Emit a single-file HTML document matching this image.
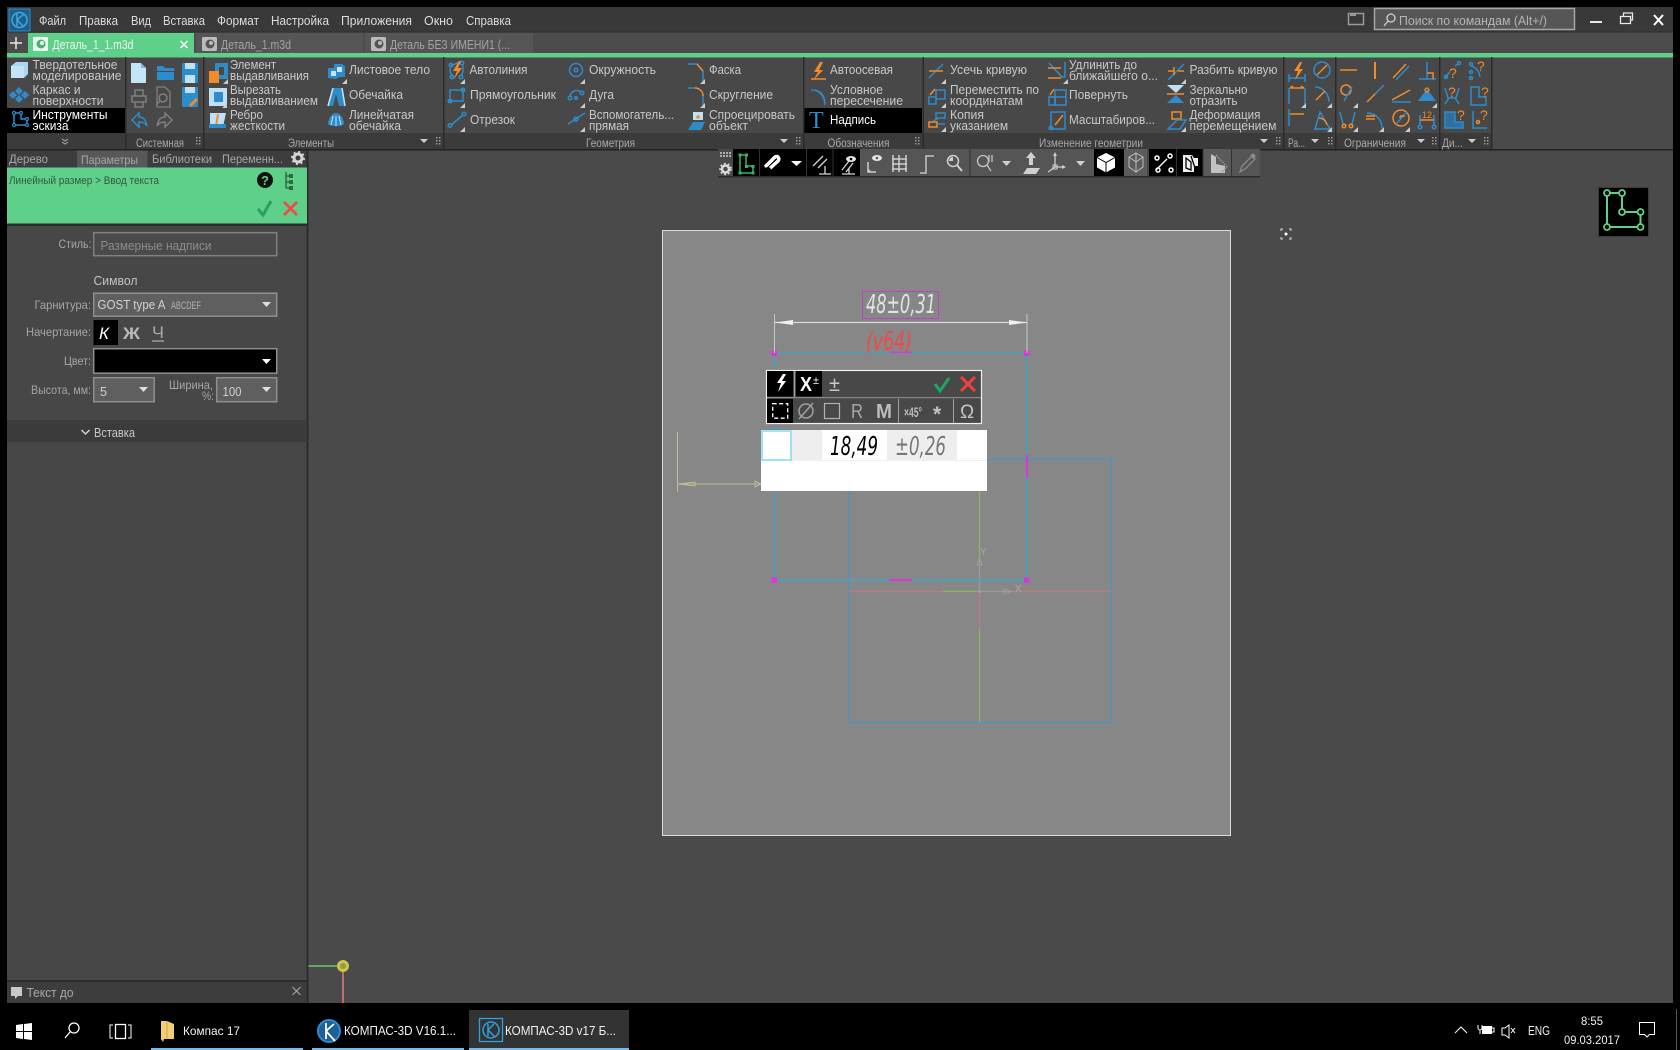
<!DOCTYPE html>
<html lang="ru"><head><meta charset="utf-8"><title>КОМПАС-3D</title>
<style>
html,body{margin:0;padding:0;background:#000;width:1680px;height:1050px;overflow:hidden}
svg{display:block;position:absolute;left:0;top:0}
text{font-family:"Liberation Sans","Noto Sans CJK SC",sans-serif;font-size:12.5px;fill:#c8c8c8}
.m{font-size:13px;fill:#dcdcdc}
.l{font-size:11.5px;fill:#a8a8a8}
.p{font-size:12px;fill:#a6a6a6}
.w{fill:#fff}
.k{font-size:12.5px;fill:#f2f2f2}
.g{font-family:"DejaVu Sans","Liberation Sans",sans-serif;font-weight:200;font-style:italic;font-size:26px}
.b{fill:none;stroke:#2f8ccb;stroke-width:1.5}
.o{fill:none;stroke:#f28c28;stroke-width:1.5}
.y{fill:none;stroke:#bdbdbd;stroke-width:1.5}
.wh{fill:none;stroke:#fff;stroke-width:1.5}
.t{fill:#d0d0d0}
.d{fill:#2f8ccb}
</style></head><body>
<svg width="1680" height="1050" viewBox="0 0 1680 1050" xmlns="http://www.w3.org/2000/svg">
<rect width="1680" height="1050" fill="#000"/>
<!-- window bg -->
<rect x="7" y="7" width="1666" height="996" fill="#4a4a4a"/>
<!-- title -->
<rect x="7" y="7" width="1666" height="25" fill="#393939"/>
<rect x="9" y="9" width="21" height="22" fill="#1c5f8a" stroke="#2f8ccb"/>
<circle cx="19.500" cy="20" r="7.500" fill="none" stroke="#3fa7df" stroke-width="1.500"/><path d="M17 14v12M17 20l7-6M17 20l7 7" fill="none" stroke="#3fa7df" stroke-width="1.500"/>
<text class="m" x="39" y="25" textLength="27" lengthAdjust="spacingAndGlyphs">Файл</text>
<text class="m" x="79" y="25" textLength="39" lengthAdjust="spacingAndGlyphs">Правка</text>
<text class="m" x="131" y="25" textLength="20" lengthAdjust="spacingAndGlyphs">Вид</text>
<text class="m" x="163" y="25" textLength="42" lengthAdjust="spacingAndGlyphs">Вставка</text>
<text class="m" x="217" y="25" textLength="42" lengthAdjust="spacingAndGlyphs">Формат</text>
<text class="m" x="271" y="25" textLength="58" lengthAdjust="spacingAndGlyphs">Настройка</text>
<text class="m" x="341" y="25" textLength="71" lengthAdjust="spacingAndGlyphs">Приложения</text>
<text class="m" x="424" y="25" textLength="29" lengthAdjust="spacingAndGlyphs">Окно</text>
<text class="m" x="466" y="25" textLength="45" lengthAdjust="spacingAndGlyphs">Справка</text>
<rect x="1348.500" y="13.500" width="15" height="11" fill="none" stroke="#9a9a9a" stroke-width="1.500"/><rect x="1350" y="13" width="6" height="3" fill="#9a9a9a"/>
<rect x="1374.500" y="8.500" width="200" height="21" fill="#565656" stroke="#a5a5a5" stroke-width="1.500"/>
<circle cx="1391" cy="18" r="4" fill="none" stroke="#d0d0d0" stroke-width="1.300"/><path d="M1388 21l-4 5" stroke="#d0d0d0" stroke-width="1.300"/>
<text x="1399" y="25" fill="#bbb" style="fill:#b4b4b4" textLength="148" lengthAdjust="spacingAndGlyphs">Поиск по командам (Alt+/)</text>
<rect x="1590" y="21" width="12" height="2" fill="#e8e8e8"/>
<path d="M1620.500 16.500h10v7h-10zM1623.500 16v-3h9v7h-2" fill="none" stroke="#e8e8e8" stroke-width="1.300"/>
<path d="M1654 15l9 10M1663 15l-9 10" stroke="#fff" stroke-width="2"/>
<!-- tabs -->
<rect x="7" y="32" width="1666" height="21" fill="#4c4c4c"/>
<rect x="7" y="31.500" width="1666" height="1" fill="#2e2e2e"/>
<path d="M10 43h12M16 37v12" stroke="#e8e8e8" stroke-width="1.500"/>
<rect x="28" y="33" width="166" height="21" fill="#5fd08a"/>
<rect x="196" y="33" width="167" height="20" fill="#555"/><rect x="365" y="33" width="168" height="20" fill="#555"/>
<rect x="33" y="37" width="15" height="14" rx="1.500" fill="#eaf7ef"/><circle cx="41" cy="44" r="4.500" fill="#4fae76"/><circle cx="42" cy="43" r="2" fill="#eaf7ef"/>
<rect x="202" y="37" width="15" height="14" rx="1.500" fill="#bbb"/><circle cx="210" cy="44" r="4.500" fill="#555"/><circle cx="211" cy="43" r="2" fill="#bbb"/>
<rect x="371" y="37" width="15" height="14" rx="1.500" fill="#bbb"/><circle cx="379" cy="44" r="4.500" fill="#555"/><circle cx="380" cy="43" r="2" fill="#bbb"/>
<text x="52.500" y="49" style="fill:#e9f7ee" textLength="81" lengthAdjust="spacingAndGlyphs">Деталь_1_1.m3d</text>
<path d="M180.500 41l7 7M187.500 41l-7 7" stroke="#fff" stroke-width="1.500"/>
<text x="221" y="49" style="fill:#a3a3a3" textLength="70" lengthAdjust="spacingAndGlyphs">Деталь_1.m3d</text>
<text x="390" y="49" style="fill:#a3a3a3" textLength="120" lengthAdjust="spacingAndGlyphs">Деталь БЕЗ ИМЕНИ1 (...</text>
<rect x="7" y="53" width="1666" height="4.500" fill="#5fd08a"/>
<!-- ribbon -->
<rect x="7" y="57.500" width="1484" height="91.500" fill="#484848"/>
<rect x="7" y="133" width="1484" height="16" fill="#3b3b3b"/>
<rect x="7" y="149" width="1666" height="1.500" fill="#222"/>
<rect x="7" y="108" width="118" height="25" fill="#000"/>
<rect x="803" y="108" width="119" height="25" fill="#000"/>
<g fill="#2b2b2b"><rect x="125" y="57" width="1.500" height="92"/><rect x="203" y="57" width="1.500" height="92"/><rect x="443" y="57" width="1.500" height="92"/><rect x="803" y="57" width="1.500" height="92"/><rect x="922.500" y="57" width="1.500" height="92"/><rect x="1283" y="57" width="1.500" height="92"/><rect x="1335" y="57" width="1.500" height="92"/><rect x="1439" y="57" width="1.500" height="92"/><rect x="1491" y="57" width="1.500" height="92"/></g>
<!-- ribbon col 1 -->
<path d="M11 66l5-4h12v12l-4 4H11z" fill="#a9d6f2"/><path d="M11 66h13v12H11z" fill="#c3e4f8"/>
<path d="M19 87l4 4-4 4-4-4zM25 91l4 4-4 4-4-4zM19 95l4 4-4 4-4-4zM13 91l4 4-4 4-4-4z" fill="#2f8ccb"/>
<path class="b" d="M14 113v12h13v-6h-6v-6z"/><g fill="#000" stroke="#2f8ccb" stroke-width="1.200"><circle cx="14" cy="113" r="1.500"/><circle cx="21" cy="113" r="1.500"/><circle cx="27" cy="119" r="1.500"/><circle cx="14" cy="125" r="1.500"/><circle cx="27" cy="125" r="1.500"/></g>
<text x="32.500" y="69" textLength="85" lengthAdjust="spacingAndGlyphs">Твердотельное</text>
<text x="32.500" y="80" textLength="89" lengthAdjust="spacingAndGlyphs">моделирование</text>
<text x="32.500" y="94" textLength="48" lengthAdjust="spacingAndGlyphs">Каркас и</text>
<text x="32.500" y="105" textLength="71" lengthAdjust="spacingAndGlyphs">поверхности</text>
<text class="w" x="32.500" y="119" textLength="75" lengthAdjust="spacingAndGlyphs">Инструменты</text>
<text class="w" x="32.500" y="130" textLength="36" lengthAdjust="spacingAndGlyphs">эскиза</text>
<path d="M62 139l3 2 3-2M62 142l3 2 3-2" fill="none" stroke="#aaa"/>
<!-- system -->
<path d="M131 63h10l5 5v15h-15z" fill="#c4e4f8"/><path d="M141 63l5 5h-5z" fill="#7fb6d9"/>
<path d="M157 66h6l2 2h9v3h-17zM157 72h17v8h-17z" fill="#2f8ccb"/>
<rect x="182" y="63" width="16" height="20" rx="1" fill="#2f8ccb"/><rect x="185" y="63" width="10" height="6" fill="#bfe0f5"/><rect x="185" y="75" width="10" height="8" fill="#bfe0f5"/>
<path d="M132 96h14v6h-14zM135 96v-6h8v6M135 102v5h8v-5" class="y" style="stroke:#7f7f7f"/>
<path d="M157 87h8l5 5v15h-13z" fill="none" stroke="#7f7f7f" stroke-width="1.300"/><circle cx="163" cy="98" r="4" fill="none" stroke="#7f7f7f" stroke-width="1.500"/><path d="M160 101l-4 4" stroke="#7f7f7f" stroke-width="1.500"/>
<rect x="182" y="87" width="16" height="20" rx="1" fill="#2f8ccb"/><rect x="185" y="87" width="10" height="6" fill="#bfe0f5"/><path d="M189 105l7-7 2 2-7 7z" fill="#f28c28"/>
<path d="M132 120l7-7v4c6 0 7 5 8 9-2-3-4-4-8-4v5z" fill="none" stroke="#2f8ccb" stroke-width="1.500"/>
<path d="M172 120l-7-7v4c-6 0-7 5-8 9 2-3 4-4 8-4v5z" fill="none" stroke="#7f7f7f" stroke-width="1.500"/>
<text class="l" x="136" y="147" textLength="48" lengthAdjust="spacingAndGlyphs">Системная</text>
<!-- elements -->
<path d="M215 63h13v16h-13z" fill="#2f8ccb"/><rect x="219" y="67" width="5" height="8" fill="#484848"/><rect x="209" y="71" width="10" height="12" fill="#f28c28"/>
<rect x="209" y="88" width="18" height="18" fill="#bfe0f5"/><rect x="214" y="92" width="9" height="10" fill="#2f8ccb"/>
<path d="M210 113h16l-3 14h-13z" fill="#bfe0f5"/><path d="M218 114l-2 13" stroke="#f28c28" stroke-width="2"/><rect x="209" y="124" width="17" height="4" fill="#2f8ccb"/>
<path d="M328 68h6v-4h8l3 2v11h-6l-3 2-8-1z" fill="#2f8ccb"/><rect x="331" y="71" width="5" height="5" fill="#c4e4f8"/><rect x="337" y="67" width="5" height="5" fill="#c4e4f8"/>
<path d="M333 88h9l3 18h-6l-3-12-3 12h-5z" fill="#2f8ccb"/><path d="M333 88l-5 18M342 88l3 18" stroke="#c4e4f8" stroke-width="1.500"/>
<path d="M336 113c-5 0-8 7-8 11 3 3 13 3 16 0 0-4-3-11-8-11z" fill="#2f8ccb"/><path d="M333 116l-2 9M336 116v10M339 116l2 9" stroke="#c4e4f8"/>
<g class="t"><path d="M228 79l-5 5h5zM227 103l-5 5h5zM347 79l-5 5h5z" fill="#ccc"/></g>
<text x="230" y="69" textLength="46" lengthAdjust="spacingAndGlyphs">Элемент</text>
<text x="230" y="80" textLength="79" lengthAdjust="spacingAndGlyphs">выдавливания</text>
<text x="230" y="94" textLength="51" lengthAdjust="spacingAndGlyphs">Вырезать</text>
<text x="230" y="105" textLength="88" lengthAdjust="spacingAndGlyphs">выдавливанием</text>
<text x="230" y="119" textLength="33" lengthAdjust="spacingAndGlyphs">Ребро</text>
<text x="230" y="130" textLength="55" lengthAdjust="spacingAndGlyphs">жесткости</text>
<text x="349" y="74" textLength="81" lengthAdjust="spacingAndGlyphs">Листовое тело</text>
<text x="349" y="99" textLength="54" lengthAdjust="spacingAndGlyphs">Обечайка</text>
<text x="349" y="119" textLength="65" lengthAdjust="spacingAndGlyphs">Линейчатая</text>
<text x="349" y="130" textLength="52" lengthAdjust="spacingAndGlyphs">обечайка</text>
<text class="l" x="288" y="147" textLength="46" lengthAdjust="spacingAndGlyphs">Элементы</text>
<path d="M420 139h8l-4 4z" fill="#ccc"/>
<!-- geometry -->
<path class="b" d="M451 66l8-4M452 64c-3 6-2 10 1 13M462 64c2 5 1 9-1 12"/><circle cx="451" cy="65" r="1.800" class="b"/><circle cx="462" cy="63" r="1.800" class="b"/><circle cx="452" cy="77" r="1.800" class="b"/><circle cx="461" cy="77" r="1.800" class="b"/>
<path d="M459 61l-6 10h4l-3 8 8-11h-4l3-7z" fill="#f28c28"/>
<rect x="450" y="90" width="13" height="11" class="b"/><circle cx="463" cy="90" r="1.800" class="b"/><circle cx="450" cy="101" r="1.800" class="b"/>
<path class="b" d="M451 125l12-10"/><circle cx="450" cy="125.500" r="1.800" class="b"/><circle cx="464" cy="114" r="1.800" class="b"/>
<path d="M465 79l-5 5h5zM465 103l-5 5h5zM465 127l-5 5h5z" fill="#ccc"/>
<text x="469.500" y="74" textLength="58" lengthAdjust="spacingAndGlyphs">Автолиния</text>
<text x="470" y="99" textLength="86" lengthAdjust="spacingAndGlyphs">Прямоугольник</text>
<text x="470" y="124" textLength="45" lengthAdjust="spacingAndGlyphs">Отрезок</text>
<circle cx="576" cy="70" r="6.500" class="b"/><circle cx="576" cy="70" r="1.800" class="b"/>
<path class="b" d="M570 97c0-6 7-8 11-5"/><circle cx="570" cy="98" r="1.800" class="b"/><circle cx="582" cy="93" r="1.800" class="b"/><circle cx="576" cy="98" r="1.300" class="b"/>
<path class="b" d="M568 124l17-11"/><circle cx="576" cy="119" r="2" class="b"/>
<path d="M585 79l-5 5h5zM585 103l-5 5h5zM585 127l-5 5h5z" fill="#ccc"/>
<text x="589" y="74" textLength="67" lengthAdjust="spacingAndGlyphs">Окружность</text>
<text x="589" y="99" textLength="25" lengthAdjust="spacingAndGlyphs">Дуга</text>
<text x="589" y="119" textLength="85" lengthAdjust="spacingAndGlyphs">Вспомогатель...</text>
<text x="589" y="130" textLength="40" lengthAdjust="spacingAndGlyphs">прямая</text>
<path class="b" d="M688 64h9l6 7v10"/><path class="o" d="M697 64l6 7"/>
<path class="b" d="M688 88h9M703 94v11"/><path class="o" d="M695 88c4 0 8 3 8 8"/>
<path d="M693 112h10v8h-10z" fill="#bfe0f5"/><circle cx="698" cy="117" r="1.800" fill="#f28c28"/><path d="M688 130l5-8h12l-4 8z" fill="#2f8ccb"/>
<path d="M705 79l-5 5h5zM705 103l-5 5h5z" fill="#ccc"/>
<text x="709" y="74" textLength="32" lengthAdjust="spacingAndGlyphs">Фаска</text>
<text x="709" y="99" textLength="64" lengthAdjust="spacingAndGlyphs">Скругление</text>
<text x="709" y="119" textLength="86" lengthAdjust="spacingAndGlyphs">Спроецировать</text>
<text x="709" y="130" textLength="39" lengthAdjust="spacingAndGlyphs">объект</text>
<text class="l" x="586" y="147" textLength="49" lengthAdjust="spacingAndGlyphs">Геометрия</text>
<path d="M780 139h8l-4 4z" fill="#ccc"/>
<!-- designations -->
<path d="M820 62l-6 10h4l-5 9 10-11h-4l4-8z" fill="#f28c28"/><path class="o" d="M811 79h15"/>
<path class="b" d="M811 90c8 0 13 5 14 15M815 90c6 1 10 5 10 15" style="stroke-width:1.300"/>
<text x="809" y="128" style="font-family:'Liberation Serif',serif;font-size:24px;fill:#2f8ccb">T</text>
<text x="830" y="74" textLength="63" lengthAdjust="spacingAndGlyphs">Автоосевая</text>
<text x="830" y="94" textLength="53" lengthAdjust="spacingAndGlyphs">Условное</text>
<text x="830" y="105" textLength="73" lengthAdjust="spacingAndGlyphs">пересечение</text>
<text class="w" x="830" y="124" textLength="46" lengthAdjust="spacingAndGlyphs">Надпись</text>
<text class="l" x="827.500" y="147" textLength="62" lengthAdjust="spacingAndGlyphs">Обозначения</text>
<!-- change geometry -->
<path class="b" d="M929 78l14-14"/><path class="o" d="M929 71h14"/>
<rect x="936" y="90" width="9" height="9" class="b"/><rect x="929" y="97" width="7" height="7" class="b"/><path class="o" d="M930 95l5-6"/>
<rect x="936" y="113" width="9" height="5" class="b"/><rect x="929" y="122" width="8" height="5" style="fill:none;stroke:#f28c28;stroke-width:1.500"/><path class="b" d="M933 121l6-3M938 124h7"/>
<path d="M946 79l-5 5h5zM946 103l-5 5h5zM946 127l-5 5h5z" fill="#ccc"/>
<text x="950" y="74" textLength="77" lengthAdjust="spacingAndGlyphs">Усечь кривую</text>
<text x="950" y="94" textLength="89" lengthAdjust="spacingAndGlyphs">Переместить по</text>
<text x="950" y="105" textLength="73" lengthAdjust="spacingAndGlyphs">координатам</text>
<text x="950" y="119" textLength="34" lengthAdjust="spacingAndGlyphs">Копия</text>
<text x="950" y="130" textLength="58" lengthAdjust="spacingAndGlyphs">указанием</text>
<path class="b" d="M1049 63l13 14h3V62"/><path class="o" d="M1048 68h13M1048 78h13" style="stroke-width:1.500"/>
<rect x="1055" y="90" width="11" height="15" class="b"/><path class="b" d="M1049 97h17"/><rect x="1049" y="97" width="6" height="8" class="b"/><path class="o" d="M1050 95l4-6"/>
<rect x="1051" y="112" width="14" height="17" class="b"/><circle cx="1051" cy="128" r="1.800" class="b"/><path class="o" d="M1055 125l8-10"/>
<path d="M1068 79l-5 5h5z" fill="#ccc"/>
<text x="1069" y="69" textLength="68" lengthAdjust="spacingAndGlyphs">Удлинить до</text>
<text x="1069" y="80" textLength="89" lengthAdjust="spacingAndGlyphs">ближайшего о...</text>
<text x="1069" y="99" textLength="59" lengthAdjust="spacingAndGlyphs">Повернуть</text>
<text x="1069" y="124" textLength="86" lengthAdjust="spacingAndGlyphs">Масштабиров...</text>
<path class="b" d="M1168 80l16-16"/><path class="o" d="M1168 71h6M1178 71h6M1174 67v8"/>
<path d="M1167 85h17l-8 8z" fill="#bfe0f5"/><path d="M1167 103h17l-8-8z" fill="#2f8ccb"/><path d="M1167 94h17" stroke="#f28c28" stroke-width="1.500"/>
<rect x="1172" y="112" width="9" height="7" class="b" style="stroke:#f28c28"/><path class="b" d="M1168 129l9-9h9l-6 9z"/>
<path d="M1186 79l-5 5h5zM1186 127l-5 5h5z" fill="#ccc"/>
<text x="1189.500" y="74" textLength="88" lengthAdjust="spacingAndGlyphs">Разбить кривую</text>
<text x="1189.500" y="94" textLength="58" lengthAdjust="spacingAndGlyphs">Зеркально</text>
<text x="1189.500" y="105" textLength="48" lengthAdjust="spacingAndGlyphs">отразить</text>
<text x="1189.500" y="119" textLength="71" lengthAdjust="spacingAndGlyphs">Деформация</text>
<text x="1189.500" y="130" textLength="87" lengthAdjust="spacingAndGlyphs">перемещением</text>
<text class="l" x="1039" y="147" textLength="104" lengthAdjust="spacingAndGlyphs">Изменение геометрии</text>
<path d="M1260 139h8l-4 4z" fill="#ccc"/>
<!-- parameter icons -->
<path class="b" d="M1289 78h16M1289 74v8M1305 74v8"/><path d="M1300 62l-6 9h4l-3 9 8-11h-4l3-7z" fill="#f28c28"/>
<circle cx="1322" cy="70" r="8" class="b"/><path class="o" d="M1317 75l10-10"/>
<path class="b" d="M1289 104V88M1305 104V88"/><path class="o" d="M1290 88h14M1290 88l3-2M1304 88l-3-2"/>
<path class="b" d="M1315 87c8 0 14 7 14 15"/><path class="o" d="M1316 100l9-9"/>
<path class="b" d="M1289 126v-17"/><path class="o" d="M1290 114h14"/>
<path class="b" d="M1315 129l5-17 10 17z"/><path class="o" d="M1319 118c4 0 7 3 8 7"/>
<path d="M1306 103l-5 5h5zM1332 103l-5 5h5zM1332 127l-5 5h5z" fill="#ccc"/>
<text class="l" x="1288" y="147" textLength="17" lengthAdjust="spacingAndGlyphs">Ра...</text>
<path d="M1311 139h8l-4 4z" fill="#ccc"/>
<!-- constraints -->
<path class="o" d="M1340 70h17"/>
<path d="M1375 62v17" stroke="#f28c28" stroke-width="2"/>
<path class="o" d="M1393 78l13-14"/><path class="b" d="M1396 80l13-14"/>
<path class="b" d="M1419 79h17M1427 62v17"/><path class="o" d="M1427 73h6v6"/>
<circle cx="1346" cy="90" r="5" class="o"/><path class="b" d="M1352 87l-8 14" style="stroke-width:1.500"/>
<path class="o" d="M1367 102l9-9"/><path class="b" d="M1375 94l9-9"/>
<path class="b" d="M1392 102h19"/><path class="o" d="M1392 100l18-10"/>
<path d="M1427 89l9 12h-18z" fill="#2f8ccb"/><circle cx="1427" cy="90" r="2" fill="none" stroke="#f28c28" stroke-width="1.300"/>
<path class="b" d="M1340 112l3 12M1355 112l-3 12"/><circle cx="1344" cy="126" r="1.800" class="o"/><circle cx="1351" cy="126" r="1.800" class="o"/>
<path class="b" d="M1367 113c8 0 15 6 15 15"/><path class="o" d="M1366 116h9M1366 119h9"/>
<circle cx="1401" cy="118" r="8" class="o"/><path class="b" d="M1396 124l11-12"/><path class="o" d="M1400 118c0-3 4-3 4-1"/>
<path class="b" d="M1420 115v10M1434 115v10"/><path class="o" d="M1420 120h14"/><circle cx="1420" cy="127" r="1.800" class="b"/><circle cx="1434" cy="127" r="1.800" class="b"/>
<text x="1422" y="118" style="font-size:9px;fill:#f28c28">12</text>
<path d="M1358 103l-5 5h5zM1384 127l-5 5h5zM1410 127l-5 5h5zM1437 103l-5 5h5zM1358 127l-5 5h5z" fill="#ccc"/>
<text class="l" x="1344" y="147" textLength="62" lengthAdjust="spacingAndGlyphs">Ограничения</text>
<path d="M1417 139h8l-4 4z" fill="#ccc"/>
<!-- diagnostics -->
<path class="b" d="M1445 77l5-5M1455 66l3-2"/><text x="1449" y="78" style="font-size:14px;fill:#f28c28">?</text><circle cx="1446" cy="77" r="1.500" class="b"/><circle cx="1459" cy="63" r="1.500" class="b"/>
<path class="b" d="M1471 66c5 1 8 5 9 11" /><circle cx="1471" cy="64" r="1.500" class="b"/><circle cx="1471" cy="72" r="1.500" class="b"/><circle cx="1471" cy="78" r="1.500" class="b"/><text x="1477" y="71" style="font-size:14px;fill:#f28c28">?</text>
<path class="b" d="M1445 88l3 10 8 0 3-10M1445 104l4-6M1459 104l-4-6"/><text x="1448" y="97" style="font-size:14px;fill:#f28c28">?</text>
<path class="b" d="M1471 87h8v10h7v8h-15z"/><text x="1481" y="97" style="font-size:14px;fill:#f28c28">?</text>
<path d="M1445 112h10v10h8v6h-18z" fill="#2f6f9f" stroke="#2f8ccb" stroke-width="1.500"/><text x="1457" y="120" style="font-size:14px;fill:#f28c28">?</text>
<path class="b" d="M1473 111v17h14"/><circle cx="1478" cy="122" r="1.500" class="o"/><text x="1480" y="120" style="font-size:14px;fill:#f28c28">?</text>
<text class="l" x="1442" y="147" textLength="21" lengthAdjust="spacingAndGlyphs">Ди...</text>
<path d="M1468 139h8l-4 4z" fill="#ccc"/>
<!-- grips -->
<g fill="#9a9a9a"><path d="M196 137h1.500v1.500H196zM199 137h1.500v1.500H199zM196 140h1.500v1.500H196zM199 140h1.500v1.500H199zM196 143h1.500v1.500H196zM199 143h1.500v1.500H199z"/><path d="M436 137h1.500v1.500H436zM439 137h1.500v1.500H439zM436 140h1.500v1.500H436zM439 140h1.500v1.500H439zM436 143h1.500v1.500H436zM439 143h1.500v1.500H439z"/><path d="M796 137h1.500v1.500H796zM799 137h1.500v1.500H799zM796 140h1.500v1.500H796zM799 140h1.500v1.500H799zM796 143h1.500v1.500H796zM799 143h1.500v1.500H799z"/><path d="M915 137h1.500v1.500H915zM918 137h1.500v1.500H918zM915 140h1.500v1.500H915zM918 140h1.500v1.500H918zM915 143h1.500v1.500H915zM918 143h1.500v1.500H918z"/><path d="M1276 137h1.500v1.500H1276zM1279 137h1.500v1.500H1279zM1276 140h1.500v1.500H1276zM1279 140h1.500v1.500H1279zM1276 143h1.500v1.500H1276zM1279 143h1.500v1.500H1279z"/><path d="M1328 137h1.500v1.500H1328zM1331 137h1.500v1.500H1331zM1328 140h1.500v1.500H1328zM1331 140h1.500v1.500H1331zM1328 143h1.500v1.500H1328zM1331 143h1.500v1.500H1331z"/><path d="M1432 137h1.500v1.500H1432zM1435 137h1.500v1.500H1435zM1432 140h1.500v1.500H1432zM1435 140h1.500v1.500H1435zM1432 143h1.500v1.500H1432zM1435 143h1.500v1.500H1435z"/><path d="M1484 137h1.500v1.500H1484zM1487 137h1.500v1.500H1487zM1484 140h1.500v1.500H1484zM1487 140h1.500v1.500H1487zM1484 143h1.500v1.500H1484zM1487 143h1.500v1.500H1487z"/></g>
<!-- left panel -->
<rect x="7" y="150.500" width="299.500" height="852.500" fill="#474747"/>
<rect x="306.500" y="150.500" width="2" height="852.500" fill="#2c2c2c"/>
<rect x="7" y="150.500" width="299.500" height="17" fill="#3d3d3d"/>
<rect x="77" y="150.500" width="70.500" height="17" fill="#585858"/>
<text class="p" x="9" y="163" textLength="39" lengthAdjust="spacingAndGlyphs">Дерево</text>
<text class="p" x="81" y="164" textLength="57" lengthAdjust="spacingAndGlyphs">Параметры</text>
<text class="p" x="152" y="163" textLength="60" lengthAdjust="spacingAndGlyphs">Библиотеки</text>
<text class="p" x="222" y="163" textLength="61" lengthAdjust="spacingAndGlyphs">Переменн...</text>
<circle cx="298" cy="158" r="4" fill="none" stroke="#d5d5d5" stroke-width="3"/><circle cx="298" cy="158" r="6" fill="none" stroke="#d5d5d5" stroke-width="2" stroke-dasharray="2 2.700"/>
<rect x="7" y="167.500" width="300" height="56" fill="#5fd08a"/>
<text x="9" y="184" style="font-size:11px;fill:#2f5a40" textLength="150" lengthAdjust="spacingAndGlyphs">Линейный размер &gt; Ввод текста</text>
<circle cx="265" cy="180" r="8" fill="#111"/><text x="261" y="185" style="font-size:13px;font-weight:bold;fill:#5fd08a">?</text>
<path d="M286 172v16M286 176h5M286 182h5M286 188h5" stroke="#2f6a48" stroke-width="1.500" fill="none"/><rect x="289" y="174" width="4" height="4" fill="#2f6a48"/><rect x="289" y="180" width="4" height="4" fill="#2f6a48"/><rect x="289" y="186" width="4" height="4" fill="#2f6a48"/>
<path d="M258 209l5 6 8-14" fill="none" stroke="#2a9d63" stroke-width="3"/>
<path d="M284 202l13 13M297 202l-13 13" stroke="#f04a4a" stroke-width="2.800"/>
<rect x="7" y="223.500" width="300" height="2.500" fill="#2c2c2c"/>
<text class="p" x="58.500" y="248" textLength="33" lengthAdjust="spacingAndGlyphs">Стиль:</text>
<rect x="93.700" y="232.700" width="183" height="23" fill="#4a4a4a" stroke="#808080" stroke-width="1.500"/>
<text x="100.500" y="250" style="fill:#8c8c8c" textLength="111" lengthAdjust="spacingAndGlyphs">Размерные надписи</text>
<text x="93.500" y="285" style="fill:#c2c2c2;font-size:12.500px" textLength="44" lengthAdjust="spacingAndGlyphs">Символ</text>
<text class="p" x="34.500" y="309" textLength="56.500" lengthAdjust="spacingAndGlyphs">Гарнитура:</text>
<rect x="93.700" y="293.200" width="183" height="23" fill="#5f5f5f" stroke="#8f8f8f" stroke-width="1.500"/>
<text x="97.500" y="309" style="fill:#d2d2d2" textLength="68" lengthAdjust="spacingAndGlyphs">GOST type A</text>
<text x="171" y="309" style="font-size:11px;fill:#b0b0b0" textLength="30" lengthAdjust="spacingAndGlyphs">ABCDEF</text>
<path d="M262 302h9l-4.500 5z" fill="#ddd"/>
<text class="p" x="26" y="336" textLength="65" lengthAdjust="spacingAndGlyphs">Начертание:</text>
<rect x="93.500" y="320" width="24.500" height="25" fill="#000"/>
<text x="99" y="339" style="font-size:17px;font-style:italic;fill:#fff">К</text>
<text x="123" y="339" style="font-size:17px;font-weight:bold;fill:#b8b8b8" textLength="17" lengthAdjust="spacingAndGlyphs">Ж</text>
<text x="152" y="338" style="font-size:17px;fill:#a8a8a8" textLength="12" lengthAdjust="spacingAndGlyphs">Ч</text><path d="M152 341h12" stroke="#a8a8a8" stroke-width="1.300"/>
<text class="p" x="64" y="365" textLength="27" lengthAdjust="spacingAndGlyphs">Цвет:</text>
<rect x="93.700" y="348.700" width="183" height="24.500" fill="#000" stroke="#8f8f8f" stroke-width="1.500"/>
<path d="M262 359h9l-4.500 5z" fill="#fff"/>
<text class="p" x="31" y="394" textLength="60" lengthAdjust="spacingAndGlyphs">Высота, мм:</text>
<rect x="93.700" y="377.700" width="60.500" height="24" fill="#5f5f5f" stroke="#8f8f8f" stroke-width="1.500"/>
<text x="100" y="396" style="fill:#cfcfcf">5</text><path d="M139 387h9l-4.500 5z" fill="#ddd"/>
<text class="p" x="169" y="389" textLength="44" lengthAdjust="spacingAndGlyphs">Ширина,</text>
<text class="p" x="202" y="400" textLength="12" lengthAdjust="spacingAndGlyphs">%:</text>
<rect x="216.700" y="377.700" width="60" height="24" fill="#5f5f5f" stroke="#8f8f8f" stroke-width="1.500"/>
<text x="222.500" y="396" style="fill:#cfcfcf" textLength="19" lengthAdjust="spacingAndGlyphs">100</text><path d="M262 387h9l-4.500 5z" fill="#ddd"/>
<rect x="7" y="420" width="300" height="22" fill="#3b3b3b"/>
<path d="M81.500 430l4 4 4-4" fill="none" stroke="#d0d0d0" stroke-width="1.500"/>
<text x="94" y="437" style="fill:#c8c8c8;font-size:12.5px" textLength="41" lengthAdjust="spacingAndGlyphs">Вставка</text>
<rect x="7" y="980" width="300" height="2" fill="#2c2c2c"/>
<rect x="7" y="982" width="299.500" height="21" fill="#3d3d3d"/>
<path d="M11 987h11v9h-4l-3 3v-3h-4z" fill="#c8c8c8"/>
<text x="26.500" y="997" style="fill:#a8a8a8" textLength="47" lengthAdjust="spacingAndGlyphs">Текст до</text>
<path d="M292.500 987l8 8M300.500 987l-8 8" stroke="#aaa" stroke-width="1"/>
<!-- origin -->
<path d="M308.500 966h29" stroke="#66a866" stroke-width="2"/>
<path d="M343 972v31" stroke="#c07070" stroke-width="2"/>
<circle cx="343" cy="966" r="6" fill="#c8c848"/><circle cx="343" cy="966" r="3" fill="#999940"/>
<!-- toolbar -->
<rect x="718" y="149" width="15" height="27" fill="#4a4a4a"/>
<rect x="733" y="149" width="127" height="27" fill="#000"/>
<rect x="860" y="149" width="234" height="27" fill="#555"/>
<rect x="1094" y="149" width="30" height="27" fill="#000"/>
<rect x="1124" y="149" width="25" height="27" fill="#5b5b5b"/>
<rect x="1149" y="149" width="54" height="27" fill="#000"/>
<rect x="1203" y="149" width="28" height="27" fill="#5b5b5b"/>
<rect x="1232" y="149" width="28" height="27" fill="#555"/>
<rect x="718" y="176" width="542" height="1.500" fill="#2c2c2c"/>
<path d="M759.500 149v27M806.500 149v27M833 149v27M970 149v27M1148 149v27M1176.500 149v27M1203 149v27M1231.500 149v27" stroke="#333"/>
<path d="M720 153h11M720 156h11" stroke="#ccc" stroke-width="1.500" stroke-dasharray="2 1"/>
<circle cx="725.500" cy="169" r="3.500" fill="none" stroke="#ddd" stroke-width="2.500"/><circle cx="725.500" cy="169" r="5.500" fill="none" stroke="#ddd" stroke-width="1.500" stroke-dasharray="2 2"/>
<path d="M740 155h6v11h7v7h-13z" fill="none" stroke="#33b46a" stroke-width="1.500"/>
<g fill="#33b46a"><rect x="738.500" y="153.500" width="3" height="3"/><rect x="745" y="153.500" width="3" height="3"/><rect x="745" y="165" width="3" height="3"/><rect x="751.500" y="165" width="3" height="3"/><rect x="738.500" y="171.500" width="3" height="3"/><rect x="751.500" y="171.500" width="3" height="3"/></g>
<path d="M765 167l10-10c3-2 5 2 3 4l-11 10" fill="none" stroke="#fff" stroke-width="3.500"/><circle cx="768" cy="170" r="3" fill="#000"/>
<path d="M791 161h11l-5.500 5z" fill="#fff"/>
<path d="M813 166l10-10M818 168l9-9M819 174h12M825 166v8" fill="none" stroke="#d5d5d5" stroke-width="1.300"/>
<path d="M842 170l7-9M846 172l7-9M842 174h13M849 168v6" fill="none" stroke="#d5d5d5" stroke-width="1.300"/><ellipse cx="851" cy="159" rx="5" ry="3" fill="#e5e5e5"/><circle cx="851" cy="159" r="1.300" fill="#000"/>
<path d="M868 162v10h8M868 172l2-2" fill="none" stroke="#cfcfcf" stroke-width="1.500"/><ellipse cx="877" cy="158" rx="5" ry="3" fill="#e5e5e5"/><circle cx="877" cy="158" r="1.300" fill="#555"/>
<path d="M893 155v17M899 155v17M906 155v17M892 159h15M892 164h15M892 169h15" fill="none" stroke="#cfcfcf" stroke-width="1.500"/>
<path d="M920 173h6v-17h8" fill="none" stroke="#c4c4c4" stroke-width="1.500"/>
<circle cx="953" cy="161" r="5.500" fill="none" stroke="#d0d0d0" stroke-width="1.500"/><path d="M953 161h-4a4 4 0 0 1 4-4z" fill="#d0d0d0"/><path d="M957 165l5 6" stroke="#d0d0d0" stroke-width="2"/>
<circle cx="983" cy="161" r="5.500" fill="none" stroke="#c4c4c4" stroke-width="1.300"/><path d="M987 165l4 6M989 155v7M992 155v7" stroke="#c4c4c4" stroke-width="1.300"/>
<path d="M1002 161h9l-4.500 5z" fill="#d0d0d0"/>
<path d="M1031 152l5 6h-3v7h-4v-7h-3zM1023 174l4-6h13l-4 6z" fill="#d0d0d0"/>
<path d="M1055 155v12M1048 172l7-5M1055 167h9" fill="none" stroke="#cfcfcf" stroke-width="1.300"/><path d="M1055 152l-2 4h4zM1066 167l-4-2v4z" fill="#cfcfcf"/><rect x="1053" y="165" width="4" height="4" fill="none" stroke="#cfcfcf"/>
<path d="M1076 161h9l-4.500 5z" fill="#d0d0d0"/>
<path d="M1106 153l9 4.500v10l-9 5-9-5v-10z" fill="#fff"/><path d="M1097 157.500l9 5 9-5M1106 162.500v10" stroke="#000" stroke-width="1" fill="none"/>
<path d="M1136 153l7 4v10l-7 5-7-5v-10zM1129 157l7 5 7-5M1136 162v10M1136 153v9" fill="none" stroke="#bcbcbc" stroke-width="1"/>
<path d="M1156 170l11-11" stroke="#fff" stroke-width="1.300"/><circle cx="1157" cy="158" r="2" class="wh"/><circle cx="1170" cy="156" r="2" class="wh"/><circle cx="1158" cy="170" r="2" class="wh"/><circle cx="1171" cy="170" r="2" class="wh"/>
<path d="M1183 155h9l2 3h4v8h-4v6h-11z" fill="#f0f0f0"/><path d="M1186 158v10l5 2v-8zM1191 156l4 12" stroke="#000" stroke-width="1.300" fill="none"/>
<path d="M1211 154l5 3v7l9 2v7h-14z" fill="#c2c2c2"/><path d="M1216 155l11 12-6 6" fill="none" stroke="#999" stroke-width="1.300" stroke-dasharray="2 1"/>
<path d="M1240 172l2-6 10-10 3 3-10 10z" fill="none" stroke="#8a8a8a" stroke-width="1.300"/><path d="M1250 156l3-3 3 3-3 3z" fill="#8a8a8a"/>
<!-- sheet -->
<rect x="662.500" y="230.500" width="568" height="605" fill="#878787" stroke="#dcdcdc" stroke-width="1"/>
<!-- blue rect -->
<rect x="848.500" y="459.500" width="263" height="263" fill="none" stroke="#3f95cc" stroke-width="1.200"/>
<path d="M979.500 491v72" stroke="#8eb85a" stroke-width="1.200"/>
<path d="M979.500 563v28" stroke="#9c9c9c" stroke-width="1.200"/>
<path d="M979.500 591v38" stroke="#bf7a82" stroke-width="1.200"/>
<path d="M979.500 629v93" stroke="#8eb85a" stroke-width="1.200"/>
<path d="M849 591.300h94M1012 591.300h99" stroke="#bf7a82" stroke-width="1.200"/>
<path d="M943 591.300h36" stroke="#8eb85a" stroke-width="1.200"/>
<path d="M979 591.300h33" stroke="#9c9c9c" stroke-width="1.200"/>
<path d="M979.500 557l-2.500 8h5zM1012 591.300l-8-2.500v5z" fill="none" stroke="#9c9c9c"/>
<rect x="978" y="590" width="3" height="3" fill="#9c9c9c"/>
<text x="980" y="555" style="font-size:10px;fill:#a8a8a8">Y</text>
<text x="1015" y="592" style="font-size:10px;fill:#a8a8a8">X</text>
<!-- sketch rect -->
<path d="M774.500 353H1027" stroke="#2fa8cf" stroke-width="1"/>
<path d="M774.500 353v227M1027 353v227" stroke="#3da3c4" stroke-width="1.500"/>
<path d="M774.500 580H1027" stroke="#4c9fb5" stroke-width="2"/>
<rect x="889.500" y="351.500" width="22" height="1.600" fill="#d838d8"/>
<rect x="889" y="579" width="23" height="2" fill="#d838d8"/>
<rect x="1026" y="455" width="2" height="23" fill="#d838d8"/>
<g fill="#d838d8"><rect x="771.500" y="350.500" width="5.500" height="5.500"/><rect x="1024" y="350.500" width="5.500" height="5.500"/><rect x="771.500" y="577.500" width="5.500" height="5.500"/><rect x="1024" y="577.500" width="5.500" height="5.500"/></g>
<!-- dimension -->
<path d="M774.500 314v39M1027 314v39" stroke="#c8c8c8" stroke-width="1"/>
<path d="M775 322.500h252" stroke="#d8d8d8" stroke-width="1.200"/>
<path d="M775 322.500l18-2.500v5zM1027 322.500l-18-2.500v5z" fill="#f0f0f0"/>
<rect x="862.500" y="291.500" width="76" height="27" fill="none" stroke="#c040c8" stroke-width="1"/>
<text class="g" x="866" y="313" style="fill:#e4e4e4" textLength="70" lengthAdjust="spacingAndGlyphs">48±0,31</text>
<text class="g" x="866" y="350" style="fill:#f04848" textLength="46" lengthAdjust="spacingAndGlyphs">(v64)</text>
<!-- left dim -->
<path d="M677.500 432v60M678 484h83" stroke="#c2bc96" stroke-width="1"/>
<path d="M678 484l17-2v4zM761 484l-6-3v6z" fill="none" stroke="#c2bc96"/>
<!-- white table -->
<rect x="761" y="430" width="226" height="61" fill="#fff"/>
<rect x="791" y="430" width="31" height="30" fill="#eee"/>
<rect x="887" y="430" width="70" height="30" fill="#eee"/>
<rect x="761" y="460" width="226" height="1" fill="#eee"/>
<rect x="762" y="431" width="29" height="29" fill="#fff" stroke="#7fdcee" stroke-width="1.500"/>
<text class="g" x="830" y="455" style="fill:#000" textLength="48" lengthAdjust="spacingAndGlyphs">18,49</text>
<text class="g" x="895" y="455" style="fill:#777" textLength="51" lengthAdjust="spacingAndGlyphs">±0,26</text>
<!-- popup -->
<rect x="766.500" y="370.500" width="215" height="53" fill="#484848" stroke="#f0f0f0" stroke-width="1.200"/>
<rect x="767" y="397" width="214" height="1.200" fill="#888"/>
<rect x="767" y="371" width="26" height="25.500" fill="#000"/>
<rect x="796" y="371" width="26" height="25.500" fill="#000"/>
<rect x="767" y="399" width="26" height="24" fill="#000"/>
<path d="M794.500 371v26M898.500 399v24M953.500 399v24" stroke="#a0a0a0" stroke-width="1"/>
<path d="M783 374l-6 9h4l-3 9 8-11h-4l4-7z" fill="#fff"/>
<text x="800" y="391" style="font-size:20px;font-weight:bold;fill:#fff" textLength="12" lengthAdjust="spacingAndGlyphs">X</text>
<text x="813" y="384" style="font-size:11px;fill:#fff">±</text>
<text x="829" y="391" style="font-size:20px;fill:#c8c8c8">±</text>
<path d="M935 384l5 7 9-13" fill="none" stroke="#1fa463" stroke-width="3"/>
<path d="M961 377l14 14M975 377l-14 14" stroke="#f04040" stroke-width="3"/>
<rect x="772.700" y="403.700" width="15" height="14.500" fill="none" stroke="#fff" stroke-width="1.300" stroke-dasharray="4 2.500"/>
<circle cx="806" cy="411" r="7" fill="none" stroke="#a0a0a0" stroke-width="1.500"/><path d="M799 419l14-16" stroke="#a0a0a0" stroke-width="1.500"/>
<rect x="824.500" y="403.500" width="15" height="15" fill="none" stroke="#b0b0b0" stroke-width="1.200"/>
<text x="851" y="418" style="font-size:20px;fill:#a8a8a8" textLength="12" lengthAdjust="spacingAndGlyphs">R</text>
<text x="876" y="418" style="font-size:20px;font-weight:bold;fill:#bcbcbc" textLength="16" lengthAdjust="spacingAndGlyphs">M</text>
<text x="904" y="417" style="font-size:14px;font-weight:bold;fill:#bcbcbc" textLength="18" lengthAdjust="spacingAndGlyphs">×45°</text>
<text x="933" y="421" style="font-size:21px;font-weight:bold;fill:#c4c4c4">*</text>
<text x="960" y="418" style="font-size:19px;fill:#c4c4c4">Ω</text>
<!-- cursor -->
<path d="M1281 231v-2h2M1289 229h2v2M1291 237v2h-2M1283 239h-2v-2" fill="none" stroke="#ddd"/><circle cx="1286" cy="234" r="1.500" fill="#fff"/>
<!-- mini icon -->
<rect x="1598.500" y="187.500" width="50" height="49" fill="#000" stroke="#3a3a3a"/>
<path d="M1607 193h15v19h18.500v15H1607z" fill="none" stroke="#5fd08a" stroke-width="2"/>
<g fill="#000" stroke="#5fd08a" stroke-width="1.800"><circle cx="1607" cy="193" r="3"/><circle cx="1622" cy="193" r="3"/><circle cx="1622" cy="212" r="3"/><circle cx="1640.500" cy="212" r="3"/><circle cx="1640.500" cy="227" r="3"/><circle cx="1607" cy="227" r="3"/></g>
<!-- taskbar -->
<rect x="0" y="1003" width="1680" height="47" fill="#000"/>
<rect x="469" y="1010" width="160" height="40" fill="#333"/>
<rect x="151" y="1048" width="152" height="2" fill="#76b9ed"/>
<rect x="312" y="1048" width="152" height="2" fill="#76b9ed"/>
<rect x="469" y="1048" width="160" height="2" fill="#76b9ed"/>
<path d="M16 1025l7-1v7h-7zM24 1024l8-1v8h-8zM16 1032h7v7l-7-1zM24 1032h8v8l-8-1z" fill="#fff"/>
<circle cx="74" cy="1028" r="5" fill="none" stroke="#fff" stroke-width="1.300"/><path d="M70 1032l-5 6" stroke="#fff" stroke-width="1.300"/>
<rect x="115.500" y="1024.500" width="10" height="14" fill="none" stroke="#fff" stroke-width="1.300"/><path d="M113 1025h-3v13h3M128 1025h3v13h-3" fill="none" stroke="#fff"/>
<path d="M161 1021h6l7 3v15h-10l-1 3-2-3z" fill="#f2cf72"/><path d="M167 1021v18" stroke="#c9a650"/>
<text x="183" y="1035" style="fill:#f2f2f2;font-size:12px" textLength="57" lengthAdjust="spacingAndGlyphs">Компас 17</text>
<circle cx="329" cy="1031" r="11" fill="#1d5f96" stroke="#2f8ccb" stroke-width="2"/><path d="M326 1023v16M326 1031l8-7M326 1031l9 10" fill="none" stroke="#fff" stroke-width="1.800"/>
<text class="k" x="344" y="1035" textLength="112" lengthAdjust="spacingAndGlyphs">КОМПАС-3D V16.1...</text>
<rect x="479.500" y="1018.500" width="23" height="23" fill="none" stroke="#2fa0e0" stroke-width="1.300"/><circle cx="491" cy="1030" r="8" fill="none" stroke="#2fa0e0" stroke-width="1.500"/><path d="M488 1024v12M488 1030l6-6M488 1030l7 7" fill="none" stroke="#2fa0e0" stroke-width="1.500"/>
<text class="k" x="505" y="1035" textLength="111" lengthAdjust="spacingAndGlyphs">КОМПАС-3D v17 Б...</text>
<!-- tray -->
<path d="M1455 1033l6-6 6 6" fill="none" stroke="#fff" stroke-width="1"/>
<rect x="1482" y="1026" width="10" height="8" fill="#fff"/><path d="M1492 1028h2v4h-2M1478 1025v3a2 2 0 0 0 4 0v-3M1480 1030v4" fill="none" stroke="#fff"/>
<path d="M1502 1028h3l4-3v13l-4-3h-3z" fill="none" stroke="#fff"/><path d="M1511 1028l4 5M1515 1028l-4 5" stroke="#fff"/>
<text x="1528" y="1035" style="fill:#f0f0f0;font-size:12.5px" textLength="22" lengthAdjust="spacingAndGlyphs">ENG</text>
<text x="1581" y="1025" style="fill:#f0f0f0;font-size:12px" textLength="22" lengthAdjust="spacingAndGlyphs">8:55</text>
<text x="1564" y="1044" style="fill:#f0f0f0;font-size:12px" textLength="56" lengthAdjust="spacingAndGlyphs">09.03.2017</text>
<path d="M1639.500 1022.500h15v12h-5l-2.500 2.500-2.500-2.500h-5z" fill="none" stroke="#fff"/>
<rect x="1676" y="1009" width="1" height="41" fill="#555"/>
</svg>
</body></html>
